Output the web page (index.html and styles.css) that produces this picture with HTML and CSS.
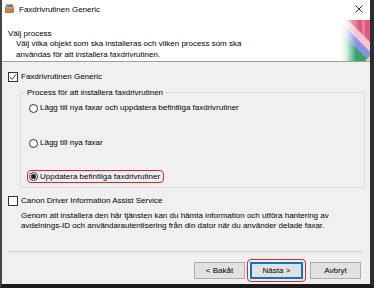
FILE: index.html
```html
<!DOCTYPE html>
<html lang="sv">
<head>
<meta charset="utf-8">
<title>Faxdrivrutinen Generic</title>
<link rel="stylesheet" href="styles.css">
</head>
<body>
<div class="window">
  <div class="titlebar">
    <svg class="appicon" width="9" height="9" viewBox="0 0 9 9">
      <rect x="0.5" y="3" width="8" height="5.5" fill="#c9823b" stroke="#8a5420" stroke-width="0.6"/>
      <rect x="1.5" y="0.5" width="6" height="3" fill="#3c7fd0"/>
      <rect x="1.5" y="0.5" width="2" height="3" fill="#3aa55c"/>
      <rect x="5.5" y="0.5" width="2" height="3" fill="#d8403c"/>
      <polygon points="0.5,3 8.5,3 7.5,4.5 1.5,4.5" fill="#e6a45a"/>
    </svg>
    <span class="title">Faxdrivrutinen Generic</span>
    <svg class="close" width="8" height="8" viewBox="0 0 8 8">
      <path d="M0.5 0.5 L7.5 7.5 M7.5 0.5 L0.5 7.5" stroke="#1a1a1a" stroke-width="0.9" fill="none"/>
    </svg>
  </div>
  <div class="header">
    <div class="header-text">
      <div class="h-title">Välj process</div>
      <div class="h-desc">Välj vilka objekt som ska installeras och vilken process som ska<br>användas för att installera faxdrivrutinen.</div>
    </div>
    <svg class="banner" width="30" height="41" viewBox="0 0 30 41">
      <defs>
        <linearGradient id="fade" x1="0" y1="0" x2="1" y2="0">
          <stop offset="0" stop-color="#ffffff" stop-opacity="1"/>
          <stop offset="0.2" stop-color="#ffffff" stop-opacity="0.85"/>
          <stop offset="0.55" stop-color="#ffffff" stop-opacity="0"/>
        </linearGradient>
      </defs>
      <rect x="0" y="0" width="30" height="41" fill="#e2577d"/>
      <rect x="14" y="0" width="4" height="41" fill="#e8728f"/>
      <rect x="22" y="0" width="3" height="41" fill="#ea7d98"/>
      <polygon points="0,-8 30,22 30,32 0,2" fill="#f4c5d6"/>
      <polygon points="0,2 30,32 30,42 0,12" fill="#8794e6"/>
      <polygon points="0,12 29,41 0,41" fill="#2fa56a"/>
      <polygon points="25,41 30,36 30,41" fill="#e9d6a2"/>
      <rect x="0" y="0" width="30" height="41" fill="url(#fade)"/>
    </svg>
  </div>
  <div class="content">
    <div class="check-row">
      <span class="checkbox">
        <svg width="8" height="8" viewBox="0 0 8 8"><path d="M0.8 4.2 L3 6.4 L7.3 1.2" stroke="#222" stroke-width="0.9" fill="none"/></svg>
      </span>
      <span>Faxdrivrutinen Generic</span>
    </div>
    <fieldset class="group">
      <legend>Process för att installera faxdrivrutinen</legend>
      <div class="radio-row first"><span class="radio"></span><span>Lägg till nya faxar och uppdatera befintliga faxdrivrutiner</span></div>
      <div class="radio-row second"><span class="radio"></span><span>Lägg till nya faxar</span></div>
      <div class="radio-row third"><span class="radio selected"></span><span>Uppdatera befintliga faxdrivrutiner</span></div>
    </fieldset>
    <div class="check-row second-check">
      <span class="checkbox"></span>
      <span>Canon Driver Information Assist Service</span>
    </div>
    <div class="desc">Genom att installera den här tjänsten kan du hämta information och utföra hantering av<br>avdelnings-ID och användarautentisering från din dator när du använder delade faxar.</div>
    <div class="separator"></div>
    <div class="buttons">
      <button class="btn">&lt; Bakåt</button>
      <span class="mark"><button class="btn default">Nästa &gt;</button></span>
      <button class="btn">Avbryt</button>
    </div>
  </div>
</div>
</body>
</html>
```
FILE: styles.css
```css
html, body {
  margin: 0;
  padding: 0;
}
body {
  width: 374px;
  height: 288px;
  overflow: hidden;
  font-family: "Liberation Sans", Arial, sans-serif;
  font-size: 8px;
  color: #000;
  background: #2a2a2a;
}
.window {
  box-sizing: border-box;
  width: 374px;
  height: 288px;
  border-left: 2px solid #454545;
  border-right: 4px solid #2d2d2d;
  border-bottom: 4px solid #1c1c1c;
  background: #f0f0f0;
  display: flex;
  flex-direction: column;
}
.titlebar {
  height: 18px;
  background: #fff;
  display: flex;
  align-items: center;
  flex: none;
}
.appicon {
  margin-left: 3px;
  margin-top: -1px;
  flex: none;
}
.title {
  margin-left: 5px;
  line-height: 11px;
  color: #000;
}
.close {
  margin-left: auto;
  margin-right: 7px;
}
.header {
  height: 43px;
  background: #fff;
  border-bottom: 1px solid #a0a0a0;
  display: flex;
  justify-content: space-between;
  flex: none;
}
.header-text {
  padding-left: 6px;
  padding-top: 10px;
}
.h-title {
  line-height: 11px;
}
.h-desc {
  margin-left: 8px;
  line-height: 10.5px;
}
.banner {
  align-self: flex-end;
  display: block;
}
.content {
  flex: 1;
  padding-left: 6px;
  display: flex;
  flex-direction: column;
}
.check-row {
  display: flex;
  align-items: center;
  height: 12px;
  line-height: 12px;
  margin-top: 9px;
}
.check-row.second-check {
  margin-top: 7px;
}
.checkbox {
  box-sizing: border-box;
  width: 10px;
  height: 10px;
  border: 1px solid #333;
  background: #fff;
  margin-right: 3px;
  display: flex;
  align-items: center;
  justify-content: center;
  flex: none;
}
.group {
  margin: 4px 0 0 12px;
  width: 345px;
  box-sizing: border-box;
  border: 1px solid #dcdcdc;
  padding: 0 4px 4px 4px;
  min-width: 0;
}
.group legend {
  padding: 0 2px;
  line-height: 11px;
}
.radio-row {
  display: flex;
  align-items: center;
  height: 12px;
  line-height: 12px;
  padding-left: 4px;
}
.radio-row.first {
  margin-top: 4px;
}
.radio-row.second {
  margin-top: 23px;
}
.radio-row.third {
  margin-top: 21px;
  margin-left: 2px;
  padding-left: 1px;
  padding-right: 3px;
  height: 11px;
  width: fit-content;
  border: 1.5px solid #e3222d;
  border-radius: 4px;
}
.radio {
  box-sizing: border-box;
  width: 9px;
  height: 9px;
  border: 1px solid #333;
  border-radius: 50%;
  background: #fff;
  margin-right: 2px;
  flex: none;
  display: flex;
  align-items: center;
  justify-content: center;
}
.radio.selected::after {
  content: "";
  width: 5px;
  height: 5px;
  border-radius: 50%;
  background: #222;
}
.desc {
  margin-top: 4px;
  margin-left: 13px;
  line-height: 10px;
}
.separator {
  margin-top: 20px;
  width: 355px;
  height: 1px;
  background: #d0d0d0;
}
.buttons {
  margin-top: 7px;
  padding-right: 9px;
  display: flex;
  justify-content: flex-end;
  align-items: center;
}
.btn {
  box-sizing: border-box;
  width: 51px;
  height: 17px;
  margin: 0;
  padding: 0;
  background: #e1e1e1;
  border: 1px solid #adadad;
  border-radius: 0;
  font-family: "Liberation Sans", Arial, sans-serif;
  font-size: 8px;
  color: #000;
}
.btn.default {
  width: 53px;
  border: 2px solid #0078d7;
}
.mark {
  display: flex;
  margin: 0 4px 0 2px;
  padding: 2px;
  border: 1.5px solid #e3222d;
  border-radius: 4px;
}
```
